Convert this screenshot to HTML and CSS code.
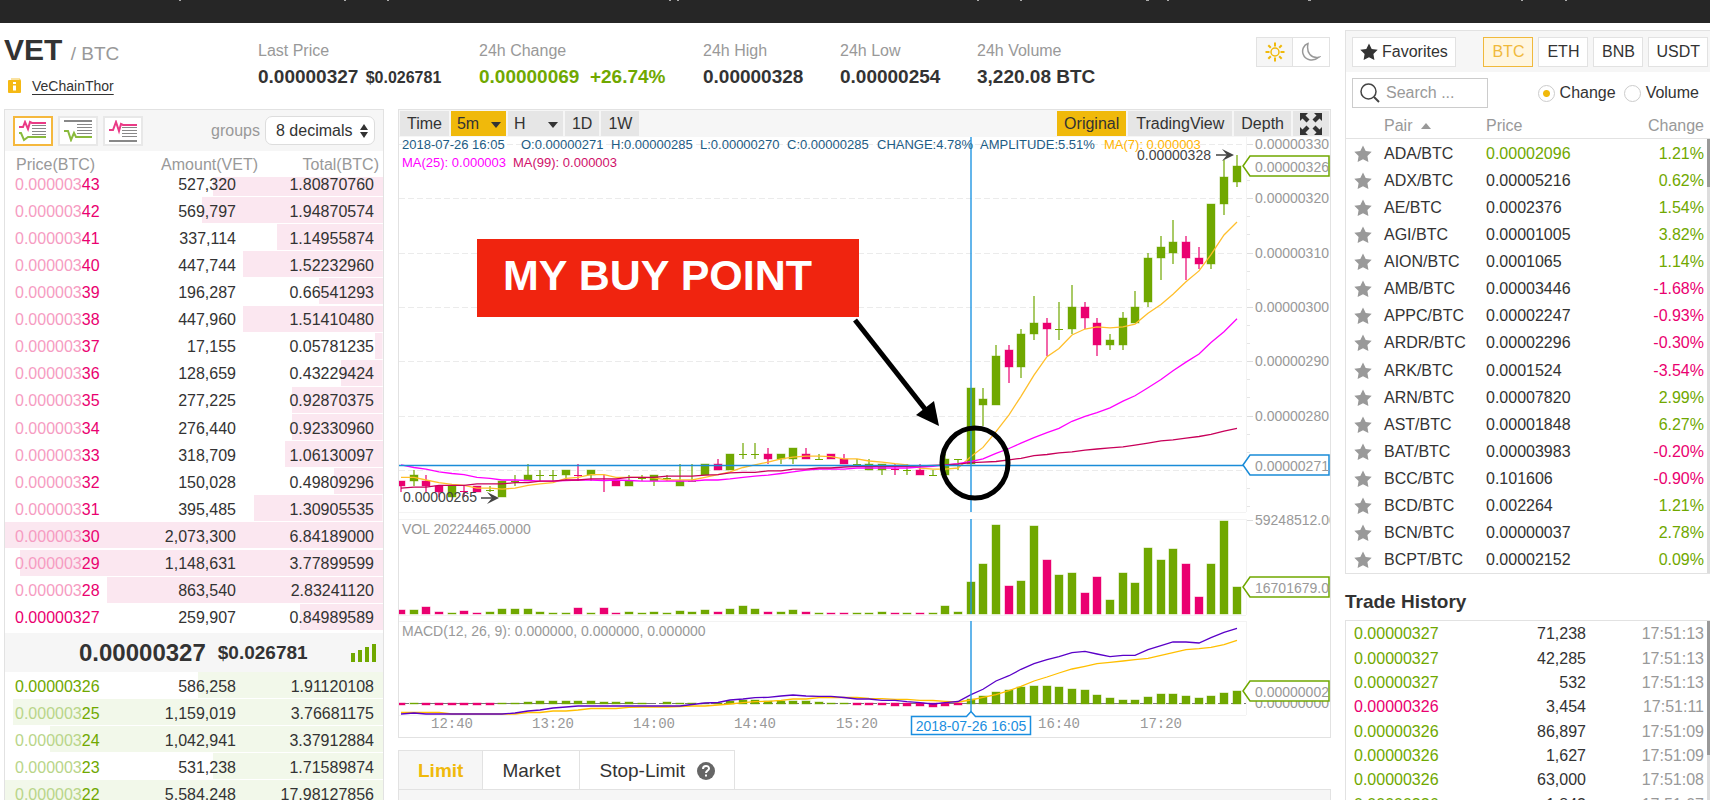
FILE: index.html
```
<!DOCTYPE html>
<html lang="en">
<head>
    <meta charset="UTF-8">
    <meta name="viewport" content="width=device-width, initial-scale=1.0">
    <title>VET / BTC</title>
    <link rel="stylesheet" href="styles.css">
</head>
<body>
    <svg class="sprite" aria-hidden="true">
        <symbol id="star" viewBox="0 0 18 18">
            <path d="M9 0.5l2.7 5.4 6 .9-4.3 4.2 1 6L9 14.3 3.6 17l1-6L.3 6.8l6-.9z"/>
        </symbol>
    </svg>

    <div class="topbar">
        <svg width="1710" height="2" aria-hidden="true">
            <path d="M180 0v1M344 0h2M388 0v1M670 0v1M678 0v1M977 0h2M1021 0v1M1146 0h3M1168 0v1M1308 0h3M1522 0v1M1566 0v1" stroke="#aaa" stroke-width="2"/>
        </svg>
    </div>

    <div class="page">
        <main class="main">
            <header class="summary">
                <div class="coin">
                    <h1>VET <span>/ BTC</span></h1>
                    <div class="coin-name">
                        <svg width="14" height="16" viewBox="0 0 14 16" aria-hidden="true">
                            <path d="M3 1h9v2" fill="none" stroke="#f5c542" stroke-width="1"/>
                            <rect x="0" y="2" width="13" height="13" rx="1" fill="#f5b914"/>
                            <path d="M6.500 4v2M6.500 7.500v5" stroke="#fff" stroke-width="3"/>
                        </svg>
                        <a href="#">VeChainThor</a>
                    </div>
                </div>
                <dl class="stats">
                    <div class="stat-price"><dt>Last Price</dt><dd>0.00000327 <small>$0.026781</small></dd></div>
                    <div class="stat-change"><dt>24h Change</dt><dd class="up">0.00000069&nbsp; +26.74%</dd></div>
                    <div class="stat"><dt>24h High</dt><dd>0.00000328</dd></div>
                    <div class="stat"><dt>24h Low</dt><dd>0.00000254</dd></div>
                    <div class="stat"><dt>24h Volume</dt><dd>3,220.08 BTC</dd></div>
                </dl>
                <div class="theme">
                    <button type="button" class="on" aria-label="Light theme">
                        <svg width="20" height="20" viewBox="0 0 20 20" fill="none" stroke="#f0b90b" stroke-width="2">
                            <circle cx="10" cy="10" r="4" stroke-width="1.500"/>
                            <path d="M10 0.500v4M10 15.500v4M.5 10h4M15.500 10h4M3.300 3.300l2.500 2.500M14.200 14.200l2.500 2.500M16.700 3.300l-2.500 2.500M5.800 14.200l-2.500 2.500"/>
                        </svg>
                    </button>
                    <button type="button" aria-label="Dark theme">
                        <svg width="20" height="20" viewBox="0 0 20 20" fill="none" stroke="#999" stroke-width="1.500">
                            <path d="M7 1.500C2.500 3 .6 8 2.200 12.200 4 17.500 11.500 20.500 18 15.200 10.500 16.500 5 11 7 1.500z"/>
                        </svg>
                    </button>
                </div>
            </header>

            <div class="columns">
                <section class="panel book">
                    <div class="book-bar">
                        <button type="button" class="view on" aria-label="Buy and sell orders">
                            <svg width="30" height="22" viewBox="0 0 30 22" fill="none">
                                <path d="M14 5.500h14M14 8.500h14M14 11.500h14M14 14.500h14" stroke="#888"/>
                                <path d="M1 7h4l2-5 3 7 2-7 2 1h14" stroke="#ea3a86" stroke-width="2"/>
                                <path d="M1 13l2 0 3 7 4-3h18" stroke="#8aba3c" stroke-width="2"/>
                            </svg>
                        </button>
                        <button type="button" class="view" aria-label="Buy orders">
                            <svg width="30" height="22" viewBox="0 0 30 22" fill="none">
                                <path d="M1 1h28" stroke="#888" stroke-width="2"/>
                                <path d="M14 4.500h15M14 7.500h15M14 10.500h15M14 13.500h15" stroke="#888"/>
                                <path d="M1 11h4l3 9 3-7 2 4h16" stroke="#8aba3c" stroke-width="2"/>
                            </svg>
                        </button>
                        <button type="button" class="view" aria-label="Sell orders">
                            <svg width="30" height="22" viewBox="0 0 30 22" fill="none">
                                <path d="M14 7.500h15M14 10.500h15M14 13.500h15M14 16.500h15" stroke="#888"/>
                                <path d="M1 21h28" stroke="#888" stroke-width="2"/>
                                <path d="M1 10h4l3-8 3 9 2-7 2 1h14" stroke="#ea3a86" stroke-width="2"/>
                            </svg>
                        </button>
                        <label class="groups" for="decimals">groups</label>
                        <div class="decimals">
                            <select id="decimals">
                                <option>8 decimals</option>
                            </select>
                            <svg width="8" height="14" viewBox="0 0 8 14" aria-hidden="true"><path d="M4 0l4 6H0zM4 14l4-6H0z" fill="#333"/></svg>
                        </div>
                    </div>
                    <div class="book-head">
                        <span>Price(BTC)</span>
                        <span>Amount(VET)</span>
                        <span>Total(BTC)</span>
                    </div>
                    <div class="asks">
                        <table class="orders sell">
                            <tr style="--depth:45%"><td><i>0.000003</i>43</td><td>527,320</td><td>1.80870760</td></tr>
                            <tr style="--depth:48%"><td><i>0.000003</i>42</td><td>569,797</td><td>1.94870574</td></tr>
                            <tr style="--depth:28%"><td><i>0.000003</i>41</td><td>337,114</td><td>1.14955874</td></tr>
                            <tr style="--depth:37%"><td><i>0.000003</i>40</td><td>447,744</td><td>1.52232960</td></tr>
                            <tr style="--depth:17%"><td><i>0.000003</i>39</td><td>196,287</td><td>0.66541293</td></tr>
                            <tr style="--depth:37%"><td><i>0.000003</i>38</td><td>447,960</td><td>1.51410480</td></tr>
                            <tr style="--depth:2%"><td><i>0.000003</i>37</td><td>17,155</td><td>0.05781235</td></tr>
                            <tr style="--depth:11%"><td><i>0.000003</i>36</td><td>128,659</td><td>0.43229424</td></tr>
                            <tr style="--depth:24%"><td><i>0.000003</i>35</td><td>277,225</td><td>0.92870375</td></tr>
                            <tr style="--depth:24%"><td><i>0.000003</i>34</td><td>276,440</td><td>0.92330960</td></tr>
                            <tr style="--depth:26%"><td><i>0.000003</i>33</td><td>318,709</td><td>1.06130097</td></tr>
                            <tr style="--depth:13%"><td><i>0.000003</i>32</td><td>150,028</td><td>0.49809296</td></tr>
                            <tr style="--depth:34%"><td><i>0.000003</i>31</td><td>395,485</td><td>1.30905535</td></tr>
                            <tr style="--depth:100%"><td><i>0.000003</i>30</td><td>2,073,300</td><td>6.84189000</td></tr>
                            <tr style="--depth:96%"><td><i>0.000003</i>29</td><td>1,148,631</td><td>3.77899599</td></tr>
                            <tr style="--depth:73%"><td><i>0.000003</i>28</td><td>863,540</td><td>2.83241120</td></tr>
                            <tr style="--depth:22%"><td>0.00000327</td><td>259,907</td><td>0.84989589</td></tr>
                        </table>
                    </div>
                    <div class="spread">
                        <strong>0.00000327</strong>
                        <b>$0.026781</b>
                        <svg width="25" height="18" viewBox="0 0 25 18" aria-hidden="true"><path d="M0 9h4v9H0zM7 6h4v12H7zM14 3h4v15h-4zM21 0h4v18h-4z" fill="#70a800"/></svg>
                    </div>
                    <table class="orders buy">
                        <tr style="--depth:49%"><td>0.00000326</td><td>586,258</td><td>1.91120108</td></tr>
                        <tr style="--depth:98%"><td><i>0.000003</i>25</td><td>1,159,019</td><td>3.76681175</td></tr>
                        <tr style="--depth:88%"><td><i>0.000003</i>24</td><td>1,042,941</td><td>3.37912884</td></tr>
                        <tr style="--depth:45%"><td><i>0.000003</i>23</td><td>531,238</td><td>1.71589874</td></tr>
                        <tr style="--depth:100%"><td><i>0.000003</i>22</td><td>5,584,248</td><td>17.98127856</td></tr>
                    </table>
                </section>

                <div class="middle">
                    <section class="panel chart">
                        <div class="chart-bar">
                            <button type="button">Time</button>
                            <div class="pick on">
                                <select aria-label="Minutes"><option>5m</option></select>
                            </div>
                            <div class="pick">
                                <select aria-label="Hours"><option>H</option></select>
                            </div>
                            <button type="button">1D</button>
                            <button type="button">1W</button>
                            <span class="spacer"></span>
                            <button type="button" class="on">Original</button>
                            <button type="button" class="wide">TradingView</button>
                            <button type="button">Depth</button>
                            <button type="button" class="expand" aria-label="Full screen">
                                <svg width="22" height="22" viewBox="0 0 22 22" fill="#333">
                                    <path d="M0 0h8L5.500 2.500l4 4-3 3-4-4L0 8zM22 0v8l-2.500-2.500-4 4-3-3 4-4L14 0zM0 22v-8l2.500 2.500 4-4 3 3-4 4L8 22zM22 22h-8l2.500-2.500-4-4 3-3 4 4L22 14z"/>
                                </svg>
                            </button>
                        </div>
                        <svg id="chart" class="canvas" viewBox="0 0 931 600" role="img" aria-label="VET/BTC 5 minute chart"></svg>
                    </section>
                    <nav class="tabs">
                        <button type="button" class="on">Limit</button>
                        <button type="button">Market</button>
                        <button type="button">Stop-Limit
                            <svg width="18" height="18" viewBox="0 0 18 18" aria-hidden="true">
                                <circle cx="9" cy="9" r="9" fill="#666"/>
                                <path d="M6 7c0-4 6-4 6-.5 0 2-3 2-3 4.500M9 12.500v2" fill="none" stroke="#fff" stroke-width="2"/>
                            </svg>
                        </button>
                    </nav>
                    <div class="order-form"></div>
                </div>
            </div>
        </main>

        <aside class="side">
            <section class="panel markets">
                <div class="markets-bar">
                    <button type="button" class="fav"><svg width="18" height="18"><use href="#star"/></svg>Favorites</button>
                    <button type="button" class="base on">BTC</button>
                    <button type="button" class="base">ETH</button>
                    <button type="button" class="base">BNB</button>
                    <button type="button" class="base">USDT</button>
                </div>
                <div class="filter">
                    <label class="search">
                        <svg width="20" height="20" viewBox="0 0 20 20" fill="none" stroke="#444" stroke-width="1.500"><circle cx="8.500" cy="8.500" r="7.500"/><path d="M14 14l5 5" stroke-width="2"/></svg>
                        <input type="text" placeholder="Search ..." aria-label="Search pairs">
                    </label>
                    <label class="radio"><input type="radio" name="show" checked>Change</label>
                    <label class="radio"><input type="radio" name="show">Volume</label>
                </div>
                <table class="pairs-head">
                    <tr><th>Pair <span class="sort"></span></th><th>Price</th><th>Change</th></tr>
                </table>
                <div class="scroll short">
                    <table class="pairs">
                        <tr><td><svg><use href="#star"/></svg></td><td>ADA/BTC</td><td class="up">0.00002096</td><td class="up">1.21%</td></tr>
                        <tr><td><svg><use href="#star"/></svg></td><td>ADX/BTC</td><td>0.00005216</td><td class="up">0.62%</td></tr>
                        <tr><td><svg><use href="#star"/></svg></td><td>AE/BTC</td><td>0.0002376</td><td class="up">1.54%</td></tr>
                        <tr><td><svg><use href="#star"/></svg></td><td>AGI/BTC</td><td>0.00001005</td><td class="up">3.82%</td></tr>
                        <tr><td><svg><use href="#star"/></svg></td><td>AION/BTC</td><td>0.0001065</td><td class="up">1.14%</td></tr>
                        <tr><td><svg><use href="#star"/></svg></td><td>AMB/BTC</td><td>0.00003446</td><td class="down">-1.68%</td></tr>
                        <tr><td><svg><use href="#star"/></svg></td><td>APPC/BTC</td><td>0.00002247</td><td class="down">-0.93%</td></tr>
                        <tr><td><svg><use href="#star"/></svg></td><td>ARDR/BTC</td><td>0.00002296</td><td class="down">-0.30%</td></tr>
                        <tr><td><svg><use href="#star"/></svg></td><td>ARK/BTC</td><td>0.0001524</td><td class="down">-3.54%</td></tr>
                        <tr><td><svg><use href="#star"/></svg></td><td>ARN/BTC</td><td>0.00007820</td><td class="up">2.99%</td></tr>
                        <tr><td><svg><use href="#star"/></svg></td><td>AST/BTC</td><td>0.00001848</td><td class="up">6.27%</td></tr>
                        <tr><td><svg><use href="#star"/></svg></td><td>BAT/BTC</td><td>0.00003983</td><td class="down">-0.20%</td></tr>
                        <tr><td><svg><use href="#star"/></svg></td><td>BCC/BTC</td><td>0.101606</td><td class="down">-0.90%</td></tr>
                        <tr><td><svg><use href="#star"/></svg></td><td>BCD/BTC</td><td>0.002264</td><td class="up">1.21%</td></tr>
                        <tr><td><svg><use href="#star"/></svg></td><td>BCN/BTC</td><td>0.00000037</td><td class="up">2.78%</td></tr>
                        <tr><td><svg><use href="#star"/></svg></td><td>BCPT/BTC</td><td>0.00002152</td><td class="up">0.09%</td></tr>
                    </table>
                </div>
            </section>

            <h2>Trade History</h2>
            <section class="panel history">
                <div class="scroll long">
                    <table class="trades">
                        <tr><td class="up">0.00000327</td><td>71,238</td><td>17:51:13</td></tr>
                        <tr><td class="up">0.00000327</td><td>42,285</td><td>17:51:13</td></tr>
                        <tr><td class="up">0.00000327</td><td>532</td><td>17:51:13</td></tr>
                        <tr><td class="down">0.00000326</td><td>3,454</td><td>17:51:11</td></tr>
                        <tr><td class="up">0.00000326</td><td>86,897</td><td>17:51:09</td></tr>
                        <tr><td class="up">0.00000326</td><td>1,627</td><td>17:51:09</td></tr>
                        <tr><td class="up">0.00000326</td><td>63,000</td><td>17:51:08</td></tr>
                        <tr><td class="up">0.00000326</td><td>1,843</td><td>17:51:07</td></tr>
                    </table>
                </div>
            </section>
        </aside>
    </div>

    <script src="chart.js"></script>
</body>
</html>
```
FILE: styles.css
```
* {
    box-sizing: border-box;
}

body {
    margin: 0;
    height: 100vh;
    overflow: hidden;
    background: #fff;
    color: #333;
    font: 16px/20px "Liberation Sans", Arial, sans-serif;
}

h1, h2, dl, dd {
    margin: 0;
}

button, select, input {
    font: inherit;
    color: inherit;
    margin: 0;
    padding: 0;
    border: 0;
    background: none;
    border-radius: 0;
}

select {
    appearance: none;
}

svg {
    display: block;
    flex: none;
}

table {
    width: 100%;
    border-collapse: collapse;
    table-layout: fixed;
}

td, th {
    padding: 2px 0 0;
    font-weight: normal;
    text-align: right;
    line-height: 20px;
}

.sprite {
    position: absolute;
    width: 0;
    height: 0;
}

.up {
    color: #70a800;
}

.down {
    color: #ea0070;
}

.topbar {
    height: 23px;
    background: #262626;
    overflow: hidden;
}

.page {
    display: grid;
    grid-template-columns: 1fr 365px;
    gap: 14px;
    padding-left: 4px;
}

.panel {
    border: 1px solid #e2e2e2;
}

/* coin summary */
.summary {
    display: flex;
    align-items: flex-start;
    height: 86px;
    padding: 14px 1px 0 0;
}

.coin {
    width: 254px;
}

.coin h1 {
    font-size: 30px;
    line-height: 26px;
}

.coin h1 span {
    font-size: 19px;
    font-weight: normal;
    color: #999;
}

.coin-name {
    display: flex;
    align-items: center;
    gap: 10px;
    padding: 9px 0 0 4px;
    font-size: 14px;
}

.coin-name a {
    color: #333;
    text-decoration: underline;
    text-underline-offset: 3px;
}

.stats {
    display: flex;
    flex: 1;
    padding-top: 4px;
}

.stats dt {
    color: #999;
}

.stats dd {
    margin-top: 6px;
    font-size: 19px;
    font-weight: bold;
    white-space: nowrap;
}

.stats small {
    font-size: 16px;
    margin-left: 2px;
}

.stat-price {
    width: 221px;
}

.stat-change {
    width: 224px;
}

.stat {
    width: 137px;
}

.theme {
    display: flex;
    border: 1px solid #e2e2e2;
}

.theme button {
    display: flex;
    align-items: center;
    justify-content: center;
    width: 36px;
    height: 28px;
}

.theme .on {
    background: #f6f6f6;
    border-right: 1px solid #e2e2e2;
}

.columns {
    display: grid;
    grid-template-columns: 380px 1fr;
    gap: 14px;
}

/* order book */
.book {
    border-bottom: 0;
}

.book-bar {
    display: flex;
    align-items: center;
    gap: 5px;
    height: 41px;
    padding: 0 8px;
    background: #f6f6f6;
}

.view {
    display: flex;
    align-items: center;
    justify-content: center;
    width: 40px;
    height: 30px;
    background: #fff;
    border: 2px solid #e8e8e8;
}

.view.on {
    border-color: #f5b83d;
}

.groups {
    margin-left: auto;
    color: #999;
}

.decimals {
    display: flex;
    align-items: center;
    height: 29px;
    padding: 0 6px 0 10px;
    background: #fff;
    border: 1px solid #ddd;
    border-radius: 7px;
}

.decimals select {
    width: 84px;
    height: 27px;
}

.book-head {
    display: grid;
    grid-template-columns: 109px 133px 1fr;
    height: 26px;
    padding: 4px 4px 0 11px;
    color: #999;
}

.book-head span + span {
    text-align: right;
}

.asks {
    display: flex;
    align-items: flex-end;
    height: 454px;
    overflow: hidden;
}

.asks .orders {
    height: 461px;
    flex: none;
}

.orders tr {
    height: 27px;
    background-repeat: no-repeat;
    background-position: right top;
    background-size: var(--depth) calc(100% - 1px);
}

.sell tr {
    background-image: linear-gradient(#fbe7f0, #fbe7f0);
}

.buy tr {
    background-image: linear-gradient(#f2f8ea, #f2f8ea);
}

.orders td:first-child {
    width: 111px;
    padding-left: 10px;
    text-align: left;
}

.orders td:nth-child(2) {
    width: 120px;
}

.orders td:last-child {
    padding-right: 9px;
}

.orders i {
    font-style: normal;
}

.sell td:first-child {
    color: #ea0070;
}

.sell i {
    color: #f69cc2;
}

.buy td:first-child {
    color: #70a800;
}

.buy i {
    color: #b9d589;
}

.spread {
    display: flex;
    align-items: center;
    gap: 12px;
    height: 39px;
    margin-top: 2px;
    padding: 0 7px 0 74px;
    background: #f6f6f6;
}

.spread strong {
    font-size: 24px;
}

.spread b {
    font-size: 19px;
}

.spread svg {
    margin-left: auto;
}

/* chart */
.chart-bar {
    display: flex;
    gap: 2px;
    height: 27px;
    padding: 1px;
    background: #f6f6f6;
}

.chart-bar button {
    padding: 0 7px;
    background: #e6e6e6;
}

.chart-bar .wide {
    padding: 0 8px;
}

.chart-bar .on {
    background: #f0b90b;
}

.chart-bar .expand {
    display: flex;
    align-items: center;
    width: 36px;
}

.pick {
    position: relative;
    width: 55px;
    background: #e6e6e6;
}

.pick select {
    width: 100%;
    height: 100%;
    padding-left: 6px;
}

.pick::after {
    content: "";
    position: absolute;
    right: 5px;
    top: 11px;
    border: 5px solid transparent;
    border-top: 6px solid #333;
    border-bottom: 0;
    pointer-events: none;
}

.spacer {
    flex: 1;
}

.canvas {
    width: 100%;
    height: auto;
}

.canvas text {
    font-size: 14px;
    fill: #999;
}

.canvas .info {
    font-size: 13px;
    fill: #1d5c85;
}

.canvas .mark {
    fill: #444;
}

.canvas .time {
    font-family: "Liberation Mono", "Courier New", monospace;
    text-anchor: middle;
}

.canvas .time-tag {
    fill: #1a8ee0;
    text-anchor: middle;
}

.canvas .note {
    font-size: 43px;
    font-weight: bold;
    fill: #fff;
}

/* order form tabs */
.tabs {
    display: flex;
    margin-top: 12px;
}

.tabs button {
    display: flex;
    align-items: center;
    gap: 12px;
    height: 39px;
    padding: 2px 19px 0;
    font-size: 19px;
    border: 1px solid #e2e2e2;
    border-width: 1px 0 0 1px;
}

.tabs button:last-child {
    border-right-width: 1px;
}

.tabs .on {
    background: #f6f6f6;
    color: #f0b90b;
    font-weight: bold;
}

.order-form {
    height: 40px;
    background: #f6f6f6;
    border: 1px solid #e2e2e2;
}

/* right column */
.side {
    padding-top: 7px;
}

.side .panel {
    border-right: 0;
}

.markets-bar {
    display: flex;
    gap: 5px;
    height: 41px;
    padding: 6px 2px 0 6px;
    background: #f6f6f6;
}

.markets-bar button {
    height: 30px;
    padding: 0 7px;
    background: #fff;
    border: 1px solid #e2e2e2;
}

.markets-bar .base {
    min-width: 50px;
}

.markets-bar .fav {
    display: flex;
    align-items: center;
    gap: 4px;
    margin-right: auto;
    fill: #333;
}

.markets-bar .on {
    background: #fff6e0;
    border-color: #f0b93c;
    color: #f0b93c;
}

.filter {
    display: flex;
    align-items: center;
    gap: 8px;
    padding: 6px 11px 0 6px;
}

.search {
    display: flex;
    align-items: center;
    gap: 6px;
    width: 136px;
    height: 30px;
    margin-right: auto;
    padding: 0 7px;
    border: 1px solid #ccc;
}

.search input {
    width: 90px;
    outline: none;
}

.search input::placeholder {
    color: #999;
}

.radio {
    display: flex;
    align-items: center;
    gap: 5px;
}

.radio input {
    appearance: none;
    width: 17px;
    height: 17px;
    border: 1px solid #ccc;
    border-radius: 50%;
    background: #fff;
}

.radio input:checked {
    background: radial-gradient(circle, #f0b90b 3px, #fff 4px);
}

.pairs-head {
    height: 31px;
    border-bottom: 1px solid #e2e2e2;
    color: #999;
}

.pairs-head th {
    padding-top: 5px;
}

.pairs-head th:first-child {
    width: 140px;
    padding-left: 38px;
    text-align: left;
}

.pairs-head th:nth-child(2) {
    text-align: left;
}

.pairs-head th:last-child {
    padding-right: 6px;
}

.sort {
    display: inline-block;
    margin: 0 0 2px 4px;
    border: 5px solid transparent;
    border-top: 0;
    border-bottom: 6px solid #999;
}

.scroll {
    padding-right: 6px;
}

.short {
    background: linear-gradient(#999 48px, #ddd 48px) right top / 3px 100% no-repeat;
}

.long {
    background: linear-gradient(#999 134px, #ddd 134px) right top / 3px 100% no-repeat;
}

.pairs {
    height: 434px;
}

.pairs svg {
    width: 18px;
    height: 18px;
    margin-left: 8px;
    fill: #999;
}

.pairs td:first-child {
    width: 38px;
}

.pairs td:nth-child(2) {
    width: 102px;
    text-align: left;
}

.pairs td:nth-child(3) {
    text-align: left;
}

.side h2 {
    padding: 18px 0 8px;
    font-size: 19px;
    line-height: 20px;
}

.trades {
    height: 195px;
}

.trades td:first-child {
    width: 110px;
    padding-left: 8px;
    text-align: left;
}

.trades td:nth-child(2) {
    width: 130px;
}

.trades td:last-child {
    color: #999;
}
```
FILE: chart.js
```
const UP = '#70a800';
const DOWN = '#ea0070';
const BLUE = '#1a8cd8';

// open, close, high, low
const candles = [
    [268, 267, 268, 266], [268, 269, 270, 267], [268, 267, 269, 266], [267, 266, 267, 265],
    [265, 267, 267, 265], [266.1, 266, 267, 265], [267, 266, 267, 266], [266.3, 266.3, 267, 266],
    [265, 268, 268, 265], [268, 268, 269, 267], [268, 269, 271, 268], [269, 269, 270, 268],
    [269, 269, 270, 268], [269, 270, 270, 268], [269.1, 269, 271, 268], [269, 270, 270, 268],
    [268.1, 268, 269, 266], [268, 267, 268, 267], [267, 268, 269, 267], [268.5, 268.5, 269, 268],
    [268, 269, 269, 267], [268.5, 268.5, 269, 268], [267, 268, 271, 267], [268, 268, 271, 268],
    [269, 271, 271, 269], [271, 270, 272, 270], [270, 273, 273, 270], [273, 273, 275, 272],
    [273, 273, 275, 272], [273, 272, 274, 271], [272, 273, 273, 271], [272, 274, 274, 271],
    [273, 272, 274, 272], [272, 272, 273, 272], [273, 272, 273, 272], [272, 271, 273, 271],
    [271, 271, 272, 271], [270, 271, 272, 270], [270, 271, 271, 269], [270.1, 270, 271, 269],
    [270, 270, 271, 269], [270, 269, 271, 269], [269, 269, 270, 269], [269, 272, 273, 269],
    [272, 272, 272, 270], [271, 285, 285, 271], [282, 283, 285, 278], [282, 291, 293, 282],
    [292, 289, 293, 286], [289, 295, 296, 287], [295, 297, 302, 294], [297, 296, 298, 291],
    [296, 296, 301, 294], [296, 300, 304, 295], [300, 298, 301, 296], [297, 293, 298, 291],
    [293, 294, 295, 292], [293, 298, 299, 292], [297, 300, 303, 297], [301, 309, 310, 300],
    [309, 311, 313, 305], [310, 312, 316, 308], [312, 309, 313, 305], [309, 308, 311, 307],
    [308, 319, 319, 307], [319, 324, 327, 317], [323, 326, 328, 322]
];

const volume = [4, 4, 7, 2, 1, 3, 1, 2, 5, 5, 5, 2, 1, 1, 6, 1, 6, 1, 2, 1, 2, 1, 3, 2, 4, 2, 5, 8, 5, 2, 2, 4, 2, 1,
    1, 1, 1, 1, 2, 1, 1, 1, 1, 8, 2, 32, 50, 89, 28, 33, 88, 54, 39, 41, 21, 37, 14, 41, 31, 66, 54, 65, 50, 17, 50, 93, 27];

const hist = [-2, 1, -2, -2, -2, -2, -2, -2, 1, 1, 2, 3, 3, 3, 3, 3, 2, 2, 2, 1, 0, 2, 1, 1, 1, 1, 3, 4, 4, 3, 3, 3, 3, 2,
    1, 1, -2, -2, -2, -3, -3, -3, -4, -3, -2, 5, 8, 12, 14, 17, 18, 18, 17, 15, 14, 9, 6, 4, 4, 7, 10, 10, 8, 6, 8, 11, 13];

const ma7 = [268.7, 268.7, 268.2, 267.7, 267.4, 267.2, 266.7, 266.7, 266.5, 266.7, 267.2, 267.5, 267.7, 268.5, 268.7,
    269.2, 269.2, 268.7, 268.7, 268.7, 268.6, 268.2, 268.2, 268.2, 268.7, 269.2, 269.7, 270.5, 271, 271.5, 272.1, 272.4,
    272.6, 272.6, 272.5, 272.1, 272.1, 271.7, 271.5, 271.2, 271, 270.4, 270.2, 270.2, 270.4, 272.5, 274.2, 277.1, 280.2,
    283.6, 287.5, 290.9, 292.4, 294.9, 296, 296.4, 296.2, 296.4, 296.9, 298.9, 300.5, 302.4, 304.7, 306.7, 309.7, 313.3, 315.7];

const ma25 = [271, 270.5, 270.2, 269.7, 269.4, 269.2, 268.7, 268.5, 268.2, 268.2, 268.1, 268, 268, 268.1, 268.2, 268.2,
    268.1, 268.2, 268.1, 268, 268, 268, 268, 268, 268.2, 268.2, 268.4, 268.7, 268.9, 269.1, 269.4, 269.7, 270, 270.2,
    270.2, 270.2, 270.4, 270.4, 270.4, 270.4, 270.4, 270.6, 270.7, 271, 271.2, 271.6, 272.1, 273.1, 274, 275, 276, 276.9,
    277.7, 279, 279.9, 280.6, 281.5, 282.7, 283.7, 285.2, 286.7, 288.3, 289.9, 291.4, 293.5, 295.5, 297.9];

const ma99 = [266.7, 266.9, 266.9, 267.2, 267.2, 267.2, 267.5, 267.5, 267.5, 267.7, 267.7, 268, 268, 268.2, 268.2, 268.4,
    268.4, 268.4, 268.7, 268.7, 268.7, 268.9, 268.9, 268.9, 269.1, 269.2, 269.5, 269.6, 269.6, 269.9, 269.9, 270.2, 270.2,
    270.4, 270.4, 270.6, 270.7, 270.7, 270.7, 270.7, 270.7, 270.8, 270.9, 271, 271.1, 271.4, 271.5, 271.6, 271.9, 272.2,
    272.7, 272.9, 273.2, 273.4, 273.7, 273.9, 274.1, 274.3, 274.6, 275, 275.4, 275.6, 275.9, 276.2, 276.6, 277.2, 277.7];

// height above the zero line of the MACD pane
const dif = [-11, -10, -11, -11, -11, -11, -11, -11, -11, -10, -8, -7, -5, -4, -3, -3, -3, -3, -3, -3, -3, -3, -3, -1.5,
    0, .5, 3, 4, 5.3, 5.7, 7, 8, 7, 6.7, 6.7, 5.5, 4, 4, 2.7, 2.7, 1.3, .3, -1, .3, 1.5, 8.3, 13.7, 22, 27.3, 33.7, 39.3,
    43.3, 46.3, 50.3, 51.7, 49, 46.3, 47.7, 47.7, 53.3, 57.3, 61, 61, 60, 65.3, 70.7, 74.7];

const dea = [-9.5, -9.5, -9.5, -9.5, -11, -11, -11, -11, -11, -11, -9.5, -9.5, -8, -8, -7, -5.5, -5.5, -5.5, -4.3, -4, -4,
    -4, -3.5, -3, -3, -2, -1, .3, 1.3, 1.7, 2.7, 4, 4, 5.3, 5.3, 5.7, 5.5, 4.7, 4.3, 3.7, 3.7, 2.7, 2.5, 1.7, 1, 3, 5.7,
    8.3, 12.3, 16.7, 22, 26, 30, 34, 36.7, 39.3, 40.7, 42, 43.3, 44.7, 47.7, 50.3, 53.3, 54.3, 55.7, 58.3, 62.7];

const VOL_BASE = 477;
const ZERO = 566;

const x = i => Math.round(2 + i * 12.66);
const y = p => Math.round(7 + (330 - p) * 5.432);
const parts = [];
const add = s => parts.push(s);

function line(x1, y1, x2, y2, color, extra = '') {
    add(`<path d="M${x1} ${y1}L${x2} ${y2}" fill="none" stroke="${color}" ${extra}/>`);
}

function bar(i, top, height, color) {
    add(`<rect x="${x(i) - 4}" y="${top}" width="8" height="${height}" fill="${color}" stroke="${color}" stroke-opacity=".4"/>`);
}

function curve(values, toY, color) {
    const pts = values.map((v, i) => x(i) + ',' + toY(v).toFixed(1)).join(' ');
    add(`<polyline points="${pts}" fill="none" stroke="${color}" stroke-width="1.3"/>`);
}

function label(tx, ty, str, cls = '', extra = '') {
    add(`<text x="${tx}" y="${ty}" class="${cls}" ${extra}>${str}</text>`);
}

function tag(cy, color, str) {
    add(`<path d="M844 ${cy}l7 -10h79v20h-79z" fill="#fff" stroke="${color}" stroke-width="1.5"/>`);
    label(856, cy + 6, str);
}

// panes and grid
[375, 382, 478, 484, 578].forEach(py => line(0, py + .5, 847, py + .5, '#f3f3f3'));
[[0, 375], [382, 478], [484, 578]].forEach(([a, b]) => line(847.5, a, 847.5, b, '#f3f3f3'));
for (let p = 330; p >= 270; p -= 10) {
    line(0, y(p) + .5, 846, y(p) + .5, '#ebebeb', 'stroke-dasharray="6 3"');
    line(848, y(p) + .5, 854, y(p) + .5, '#ddd');
    line(848, y(p) + 18.5, 851, y(p) + 18.5, '#e5e5e5');
    line(848, y(p) + 36.5, 851, y(p) + 36.5, '#e5e5e5');
    if (p > 270) label(856, y(p) + 5, '0.00000' + p);
}
line(848, 383.5, 854, 383.5, '#ddd');
label(856, 388, '59248512.0000');
line(0, ZERO + .5, 847, ZERO + .5, '#777', 'stroke-dasharray="10 3"');
label(856, 571, '0.00000000');

// candles, volume and MACD bars
candles.forEach(([open, close, high, low], i) => {
    const color = close >= open ? UP : DOWN;
    const top = y(Math.max(open, close));
    const height = y(Math.min(open, close)) - top;
    line(x(i), y(high), x(i), y(low), color, 'stroke-width="1.5" stroke-opacity=".8"');
    if (height > 1) {
        bar(i, top, height, color);
    } else {
        line(x(i) - 4, top + .5, x(i) + 4, top + .5, color);
    }
    bar(i, VOL_BASE - volume[i], volume[i], color);
    if (hist[i] > 0) bar(i, ZERO - hist[i] + 1, hist[i], UP);
    if (hist[i] < 0) bar(i, ZERO, -hist[i], DOWN);
});

curve(ma7, v => 7.3 + (330 - v) * 5.432, '#ffbf2b');
curve(ma25, v => 7.3 + (330 - v) * 5.432, '#f0f');
curve(ma99, v => 7.3 + (330 - v) * 5.432, '#c8005a');
curve(dea, v => ZERO - v, '#ffbf00');
curve(dif, v => ZERO - v, '#5a00c8');

// crosshair
line(0, 328.5, 844, 328.5, BLUE, 'stroke-width="1.5"');
[[0, 375], [382, 477], [484, 575]].forEach(([a, b]) => line(572, a, 572, b, '#2196e3', 'stroke-width="2" stroke-opacity=".7"'));

tag(29, UP, '0.00000326');
tag(328, BLUE, '0.00000271');
tag(450, UP, '16701679.0000');
tag(554, UP, '0.00000002');

[['12:40', 4], ['13:20', 12], ['14:00', 20], ['14:40', 28], ['15:20', 36], ['16:40', 52], ['17:20', 60]]
    .forEach(([t, i]) => label(x(i), 591, t, 'time'));
add('<path d="M512.500 579.500h55l4.500 -5l4.500 5h55v18h-119z" fill="#fff" stroke="#1a8ee0" stroke-width="1.5"/>');
label(572, 594, '2018-07-26 16:05', 'time-tag');

// info lines
[[3, '2018-07-26 16:05'], [122, 'O:0.00000271'], [212, 'H:0.00000285'], [301, 'L:0.00000270'], [388, 'C:0.00000285'],
    [478, 'CHANGE:4.78%'], [581, 'AMPLITUDE:5.51%']].forEach(([tx, t]) => label(tx, 12, t, 'info'));
label(705, 12, 'MA(7): 0.000003', 'info', 'style="fill:#ffb400"');
label(3, 30, 'MA(25): 0.000003', 'info', 'style="fill:#f0f"');
label(114, 30, 'MA(99): 0.000003', 'info', 'style="fill:#d0106a"');
label(3, 397, 'VOL 20224465.0000');
label(3, 499, 'MACD(12, 26, 9): 0.000000, 0.000000, 0.000000');

// day low and high
label(4, 365, '0.00000265', 'mark');
label(738, 23, '0.00000328', 'mark');
[[82, 361], [817, 18]].forEach(([ax, ay]) =>
    add(`<path d="M${ax} ${ay}h12" stroke="#444" stroke-width="1.5"/><path d="M${ax + 6} ${ay - 6}l12 6l-12 6l5 -6z" fill="#444"/>`));

// buy point note
add('<rect x="78" y="102" width="382" height="78" fill="#f0240f"/>');
label(104, 153, 'MY BUY POINT', 'note');
add('<path d="M456 183L526 272" stroke="#000" stroke-width="5"/><path d="M540 289L517 278L535 264z"/>');
add('<ellipse cx="576" cy="326" rx="33" ry="35" fill="none" stroke="#000" stroke-width="5"/>');

document.getElementById('chart').innerHTML = parts.join('');
```
